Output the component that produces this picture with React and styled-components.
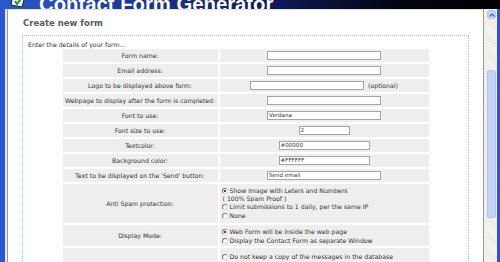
import React from 'react';
import styled, { createGlobalStyle } from 'styled-components';

const GlobalStyle = createGlobalStyle`
  html, body {
    margin: 0;
    padding: 0;
    background: #ffffff;
    overflow: hidden;
  }
  body {
    font-family: "DejaVu Sans", Verdana, sans-serif;
  }
`;

const fields = [
  { label: 'Form name:', width: 114 },
  { label: 'Email address:', width: 114 },
  { label: 'Logo to be displayed above form:', width: 114, note: '(optional)' },
  { label: 'Webpage to display after the form is completed:', width: 114 },
  { label: 'Font to use:', width: 114, value: 'Verdana' },
  { label: 'Font size to use:', width: 51, value: '2' },
  { label: 'Textcolor:', width: 91, value: '#00000' },
  { label: 'Background color:', width: 91, value: '#FFFFFF' },
  { label: "Text to be displayed on the 'Send' button:", width: 114, value: 'Send email' },
];

const Radio = ({ checked }) => (
  <RadioDot>{checked && <RadioMark />}</RadioDot>
);

const TitleIcon = () => (
  <svg width="17" height="9" viewBox="0 0 17 9">
    <path d="M3 -6 L15 -4 L12 7 L1 5 Z" fill="#f4f4f4" stroke="#222" strokeWidth="1" />
    <path d="M5 1 L7 4 L13 -4" fill="none" stroke="#1f9a2a" strokeWidth="2" />
  </svg>
);

const ScrollUp = () => (
  <svg width="6" height="4" viewBox="0 0 6 4">
    <path d="M0.5 3.5 L3 1 L5.5 3.5" fill="none" stroke="#4d6185" strokeWidth="1.2" />
  </svg>
);

export default function App() {
  return (
    <Window>
      <GlobalStyle />
      <Banner>
        <TitleIcon />
        <Title>Contact Form Generator</Title>
      </Banner>
      <Body>
        <FrameLeft />
        <Page>
          <Heading>Create new form</Heading>
          <FormBox>
            <Intro>Enter the details of your form...</Intro>
            <FormGrid>
              {fields.map(f => (
                <React.Fragment key={f.label}>
                  <LabelCell>{f.label}</LabelCell>
                  <InputCell>
                    <TextBox $width={f.width}>{f.value}</TextBox>
                    {f.note && <Note>{f.note}</Note>}
                  </InputCell>
                </React.Fragment>
              ))}

              <LabelCell>Anti Spam protection:</LabelCell>
              <OptionCell $top={2} $bottom={3}>
                <Option><Radio checked />Show Image with Leters and Numbers</Option>
                <PlainLine>( 100% Spam Proof )</PlainLine>
                <Option><Radio />Limit submissions to 1 daily, per the same IP</Option>
                <Option><Radio />None</Option>
              </OptionCell>

              <LabelCell>Display Mode:</LabelCell>
              <OptionCell $top={2} $bottom={1}>
                <Option><Radio checked />Web Form will be inside the web page</Option>
                <Option><Radio />Display the Contact Form as separate Window</Option>
              </OptionCell>

              <LabelCell>Database settings:</LabelCell>
              <OptionCell $top={4} $bottom={2}>
                <Option><Radio />Do not keep a copy of the messages in the database</Option>
                <Option><Radio checked />Keep a copy of the messages in the database</Option>
                <Option><Radio />Keep only the last 100 messages</Option>
              </OptionCell>
            </FormGrid>
          </FormBox>
        </Page>
        <Gutter />
        <Scrollbar>
          <ScrollButton><ScrollUp /></ScrollButton>
          <Track>
            <Thumb />
          </Track>
        </Scrollbar>
        <FrameRight />
      </Body>
    </Window>
  );
}

const Window = styled.div`
  display: flex;
  flex-direction: column;
  width: 500px;
  height: 262px;
  overflow: hidden;
`;

const Banner = styled.div`
  display: flex;
  align-items: flex-end;
  gap: 12px;
  height: 9px;
  padding-left: 10px;
  overflow: hidden;
  background: linear-gradient(to right, #2b58cf 0%, #1c3a9c 25%, #0b1a5a 55%, #02040f 80%, #000000 100%);
`;

const Title = styled.div`
  flex: none;
  font-family: "Liberation Sans", Arial, sans-serif;
  font-weight: bold;
  font-size: 20.3px;
  line-height: 20px;
  margin-bottom: -5px;
  color: #ffffff;
  white-space: nowrap;
`;

const Body = styled.div`
  display: flex;
  flex: 1;
  min-height: 0;
`;

const FrameLeft = styled.div`
  width: 5px;
  background: #2a56d6;
  border-right: 2px solid #ece9d8;
`;

const FrameRight = styled.div`
  width: 3px;
  background: #2a56d6;
`;

const Page = styled.div`
  flex: 1;
  min-width: 0;
  background: #ffffff;
  border-left: 1px solid #9a9a9a;
  border-right: 1px solid #9a9a9a;
  border-top: 1px solid #e6e2cf;
  padding: 0 14px;
`;

const Gutter = styled.div`
  width: 2px;
  background: #f1efe6;
`;

const Heading = styled.div`
  padding: 8px 0 0 1px;
  height: 17px;
  font-weight: bold;
  font-size: 8.5px;
  line-height: 10px;
  color: #5a5a5a;
`;

const FormBox = styled.div`
  border: 1px dotted #a8badc;
  border-bottom: none;
  padding: 4px 0 0;
`;

const Intro = styled.div`
  padding-left: 5px;
  font-size: 6.2px;
  line-height: 9px;
  color: #333333;
`;

const FormGrid = styled.div`
  display: grid;
  grid-template-columns: 155px 209px;
  column-gap: 2px;
  row-gap: 2px;
  width: 366px;
  margin: 0 auto;
`;

const LabelCell = styled.div`
  display: flex;
  align-items: center;
  justify-content: center;
  min-height: 13px;
  background: #eeeeee;
  font-size: 6.2px;
  color: #333333;
  text-align: center;
  white-space: nowrap;
`;

const InputCell = styled.div`
  display: flex;
  align-items: center;
  justify-content: center;
  gap: 4px;
  height: 13px;
  background: #eeeeee;
`;

const TextBox = styled.div`
  box-sizing: border-box;
  width: ${p => p.$width}px;
  height: 9px;
  padding: 0 1px;
  background: #ffffff;
  border: 1px solid #a5a5a5;
  font-size: 5.6px;
  line-height: 7px;
  color: #333333;
  white-space: nowrap;
`;

const Note = styled.span`
  font-size: 6.2px;
  color: #333333;
`;

const OptionCell = styled.div`
  display: flex;
  flex-direction: column;
  padding: ${p => p.$top}px 2px ${p => p.$bottom}px;
  background: #eeeeee;
  font-size: 6.2px;
  color: #333333;
  white-space: nowrap;
`;

const Option = styled.div`
  display: flex;
  align-items: center;
  gap: 2px;
  height: 9px;
`;

const PlainLine = styled.div`
  height: 7px;
  line-height: 7px;
  padding-left: 1px;
`;

const RadioDot = styled.span`
  display: flex;
  align-items: center;
  justify-content: center;
  box-sizing: border-box;
  width: 6px;
  height: 6px;
  border-radius: 50%;
  border: 1px solid;
  border-color: #7a7a7a #dcdcdc #dcdcdc #7a7a7a;
  background: #ffffff;
`;

const RadioMark = styled.span`
  width: 2px;
  height: 2px;
  border-radius: 50%;
  background: #111111;
`;

const Scrollbar = styled.div`
  display: flex;
  flex-direction: column;
  width: 11px;
  padding-top: 1px;
  background: #f4f2ea;
`;

const ScrollButton = styled.div`
  display: flex;
  align-items: center;
  justify-content: center;
  height: 9px;
  margin: 0 1px;
  border-radius: 2px;
  background: #c6d6fb;
  border: 1px solid #b5c7ef;
  box-sizing: border-box;
`;

const Track = styled.div`
  flex: 1;
  padding-top: 51px;
  background: repeating-linear-gradient(45deg, #f7f5ee 0 1px, #ecebe2 1px 2px);
`;

const Thumb = styled.div`
  height: 148px;
  margin: 0 1px;
  border-radius: 2px;
  background: #c3d4fc;
  border: 1px solid #b3c6f2;
  box-sizing: border-box;
`;
